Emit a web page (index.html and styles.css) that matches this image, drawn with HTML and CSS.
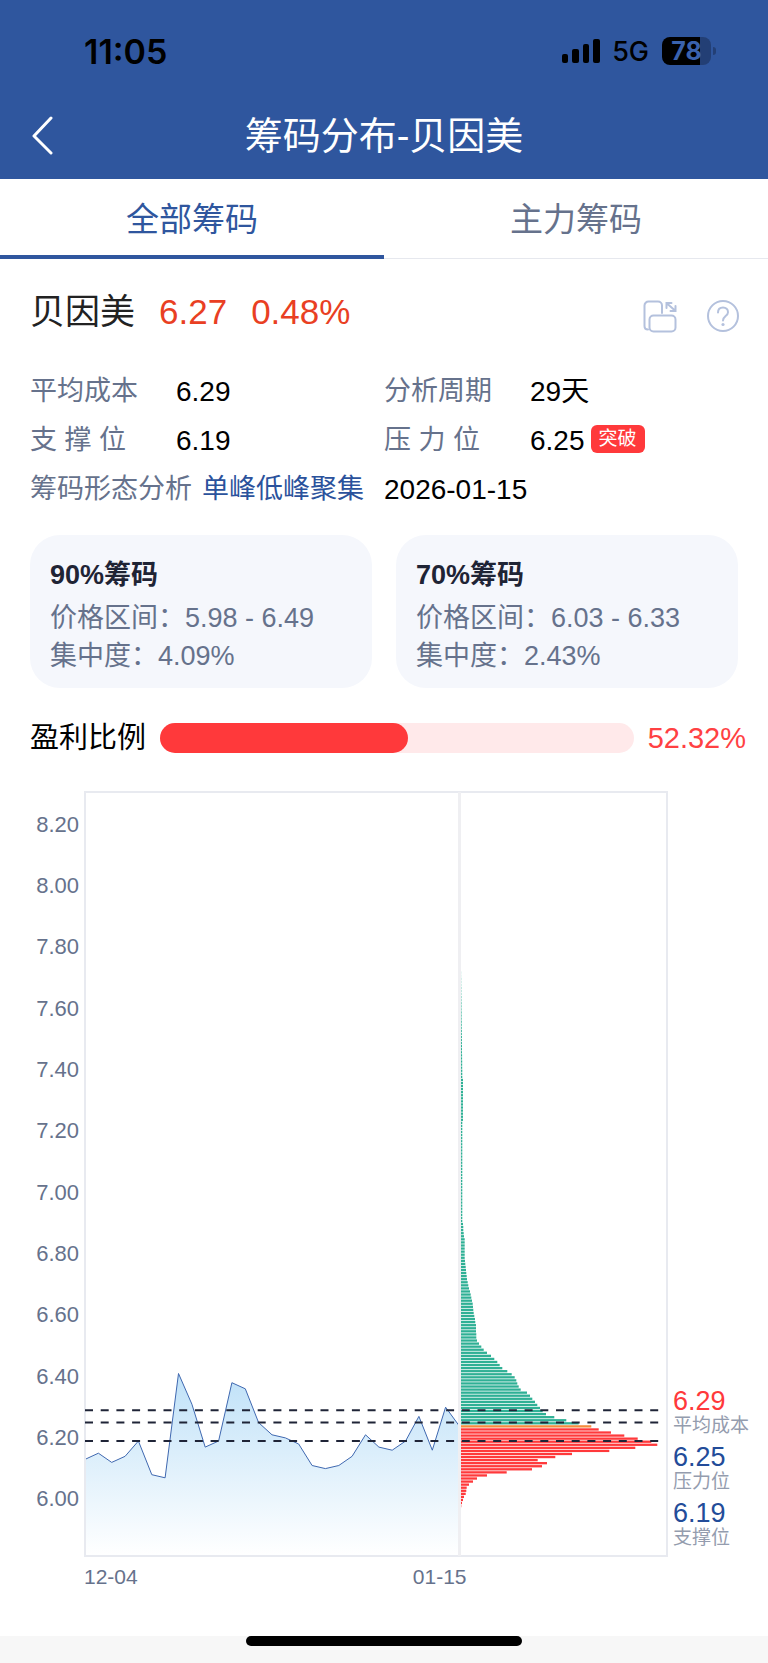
FILE: index.html
```html
<!DOCTYPE html>
<html lang="zh-CN">
<head>
<meta charset="utf-8">
<meta name="viewport" content="width=device-width, initial-scale=1">
<title>筹码分布-贝因美</title>
<link rel="stylesheet" href="styles.css">
</head>
<body>
<header class="header">
  <div class="status">
    <span class="clock">11:05</span>
    <div class="status-right">
      <svg class="signal" viewBox="0 0 38 24" aria-hidden="true">
        <rect x="0" y="15" width="6" height="9" rx="2"/>
        <rect x="10" y="10" width="7" height="14" rx="2"/>
        <rect x="21" y="5" width="6" height="19" rx="2"/>
        <rect x="31" y="0" width="7" height="24" rx="2"/>
      </svg>
      <span class="network">5G</span>
      <span class="battery"><span class="battery-body">78</span><span class="battery-tip"></span></span>
    </div>
  </div>
  <div class="nav">
    <button class="back" type="button" aria-label="返回">
      <svg viewBox="0 0 22 40" aria-hidden="true"><path d="M19 2 2 20l17 17"/></svg>
    </button>
    <h1 class="title">筹码分布-贝因美</h1>
  </div>
</header>

<nav class="tabs" role="tablist">
  <button class="tab tab-active" type="button" role="tab" aria-selected="true">全部筹码</button>
  <button class="tab" type="button" role="tab" aria-selected="false">主力筹码</button>
</nav>

<main class="main">
  <section class="quote">
    <h2 class="name">贝因美</h2>
    <span class="price">6.27</span>
    <span class="price">0.48%</span>
    <div class="tools">
      <button class="tool" type="button" aria-label="切换横屏">
        <svg viewBox="0 0 34 34" aria-hidden="true">
          <path d="M5 29.500C2.500 29.500 1.500 28 1.500 26V5.500a4 4 0 0 1 4-4H15a4 4 0 0 1 4 4V13"/>
          <rect x="6.500" y="15.500" width="26" height="16" rx="4"/>
          <path d="m24 3.500 8 7M23.500 8V3h5M32.500 6v5h-5"/>
        </svg>
      </button>
      <button class="tool" type="button" aria-label="帮助">
        <svg viewBox="0 0 34 34" aria-hidden="true">
          <circle cx="17" cy="16" r="15"/>
          <path d="M12 12.500c0-3 2-5 5-5s5 2 5 4.700c0 3.800-5 4-5 8.300"/>
          <circle class="dot" cx="17" cy="24.500" r="1.600"/>
        </svg>
      </button>
    </div>
  </section>

  <dl class="facts">
    <div class="fact"><dt class="fact-label">平均成本</dt><dd class="fact-value">6.29</dd></div>
    <div class="fact"><dt class="fact-label">分析周期</dt><dd class="fact-value">29天</dd></div>
    <div class="fact"><dt class="fact-label">支 撑 位</dt><dd class="fact-value">6.19</dd></div>
    <div class="fact"><dt class="fact-label">压 力 位</dt><dd class="fact-value">6.25<span class="badge">突破</span></dd></div>
    <div class="fact"><dt>筹码形态分析</dt><dd class="shape"><a class="shape-link" href="#">单峰低峰聚集</a></dd></div>
    <div class="fact"><dd class="fact-value">2026-01-15</dd></div>
  </dl>

  <section class="cards">
    <article class="card">
      <h3 class="card-title">90%筹码</h3>
      <p class="card-line">价格区间：5.98 - 6.49</p>
      <p class="card-line">集中度：4.09%</p>
    </article>
    <article class="card">
      <h3 class="card-title">70%筹码</h3>
      <p class="card-line">价格区间：6.03 - 6.33</p>
      <p class="card-line">集中度：2.43%</p>
    </article>
  </section>
</main>

<section class="profit">
  <span class="profit-label">盈利比例</span>
  <div class="bar"><div class="bar-fill" style="width:52.32%"></div></div>
  <span class="profit-value">52.32%</span>
</section>

<section class="chart">
  <div class="scale">
    <span>8.20</span><span>8.00</span><span>7.80</span><span>7.60</span><span>7.40</span><span>7.20</span>
    <span>7.00</span><span>6.80</span><span>6.60</span><span>6.40</span><span>6.20</span><span>6.00</span>
  </div>
  <svg class="plot" viewBox="0 0 584 766" role="img" aria-label="筹码分布图">
    <defs>
      <linearGradient id="area" gradientUnits="userSpaceOnUse" x1="0" y1="582" x2="0" y2="764">
        <stop offset="0" stop-color="#bfe1f8"/><stop offset="1" stop-color="#ffffff"/>
      </linearGradient>
    </defs>
    <path id="trend-area" class="trend-area"/>
    <path id="trend-line" class="trend-line"/>
    <rect class="frame" x="1" y="1" width="582" height="764"/>
    <path class="divider" d="M375.500 1V765"/>
    <g id="bars"></g>
    <g id="levels" class="levels"></g>
  </svg>
  <div class="legend">
    <div class="mark mark-cost"><b class="mark-price">6.29</b><span class="mark-name">平均成本</span></div>
    <div class="mark"><b class="mark-price">6.25</b><span class="mark-name">压力位</span></div>
    <div class="mark"><b class="mark-price">6.19</b><span class="mark-name">支撑位</span></div>
  </div>
  <div class="dates"><span>12-04</span><span>01-15</span></div>
</section>

<footer class="footer"><div class="home"></div></footer>
<script src="chart.js"></script>
</body>
</html>
```
FILE: styles.css
```css
* { box-sizing: border-box; }

body {
  margin: 0;
  min-height: 100vh;
  display: flex;
  flex-direction: column;
  background: #fff;
  color: #000;
  font-family: "Liberation Sans", "Noto Sans CJK SC", sans-serif;
  font-size: 27px;
  font-weight: 400;
}

h1, h2, h3, p, dl, dd { margin: 0; font-size: inherit; font-weight: inherit; }

button {
  padding: 0;
  border: 0;
  background: none;
  color: inherit;
  font: inherit;
  cursor: pointer;
}

/* Header */
.header { background: #2f569e; color: #fff; }

.status {
  display: flex;
  align-items: center;
  justify-content: space-between;
  height: 92px;
  padding: 10px 52px 0 84px;
  color: #000;
  font-family: Inter, sans-serif;
}
.clock { font-size: 34px; font-weight: 600; }
.status-right { display: flex; align-items: center; }
.signal { width: 38px; height: 24px; }
.network { margin: 0 13px 0 12px; font-size: 27px; font-weight: 500; }
.battery { display: flex; align-items: center; gap: 2px; }
.battery-body {
  width: 49px;
  height: 28px;
  border-radius: 8px;
  background: linear-gradient(to right, #000 78%, #233f75 78%);
  color: #3a62ad;
  font-size: 25px;
  font-weight: 700;
  line-height: 28px;
  text-align: center;
}
.battery-tip { width: 3px; height: 8px; border-radius: 0 4px 4px 0; background: #233f75; }

.nav {
  display: grid;
  grid-template-columns: 80px 1fr 80px;
  align-items: center;
  height: 87px;
}
.back { height: 40px; padding-left: 32px; text-align: left; }
.back svg { display: block; width: 22px; height: 40px; fill: none; stroke: #fff; stroke-width: 3; stroke-linecap: round; stroke-linejoin: round; }
.title { padding-top: 1px; font-size: 38px; line-height: 48px; text-align: center; }

/* Tabs */
.tabs { display: grid; grid-template-columns: 1fr 1fr; height: 80px; }
.tab { padding-bottom: 4px; box-shadow: inset 0 -1px #e6e8ee; color: #66728c; font-size: 33px; }
.tab-active { box-shadow: inset 0 -4px #2f569e; color: #2f569e; }

/* Quote */
.main { padding: 0 30px; }
.quote { display: flex; align-items: center; height: 106px; gap: 24px; font-size: 35px; line-height: 48px; }
.name { color: #222; }
.price { color: #e93f23; }
.tools { display: flex; gap: 29px; margin: 10px -2px 0 auto; }
.tool { width: 34px; height: 34px; }
.tool svg { display: block; width: 34px; height: 34px; fill: none; stroke: #b4c1dd; stroke-width: 2; stroke-linecap: round; }
.tool .dot { fill: #b4c1dd; stroke: none; }

/* Facts */
.facts { display: grid; grid-template-columns: 1fr 1fr; padding-top: 2px; color: #66728c; line-height: 49px; }
.fact { display: flex; height: 49px; white-space: nowrap; }
.fact-label { width: 146px; }
.fact-value { display: flex; align-items: center; color: #000; font-size: 28px; }
.shape { padding-left: 10px; }
.shape-link { color: #2b529c; text-decoration: none; }
.badge {
  margin: 0 0 4px 6px;
  padding: 0 8px;
  border-radius: 6px;
  background: #ff393b;
  color: #fff;
  font-size: 19px;
  line-height: 28px;
}

/* Cards */
.cards { display: grid; grid-template-columns: 1fr 1fr; gap: 24px; margin-top: 21px; }
.card { padding: 21px 20px 13px; border-radius: 30px; background: #f5f7fc; color: #66728c; }
.card-title { margin-bottom: 5px; color: #1f2435; font-weight: 700; line-height: 38px; }
.card-line { line-height: 38px; }

/* Profit ratio */
.profit { display: flex; align-items: center; height: 99px; margin-bottom: 4px; padding: 0 22px 0 30px; font-size: 29px; line-height: 40px; }
.bar { flex: 1; height: 30px; margin: 0 14px; border-radius: 15px; background: #ffe9ea; }
.bar-fill { height: 100%; border-radius: 15px; background: #ff393b; }
.profit-value { color: #ff4143; }

/* Chart */
.chart { display: grid; grid-template-columns: 84px 1fr 100px; }
.scale {
  display: flex;
  flex-direction: column;
  padding: 3px 5px 27px 0;
  color: #66728c;
  font-size: 22px;
  text-align: right;
}
.scale span { display: flex; flex: 1; align-items: center; justify-content: flex-end; }
.plot { display: block; width: 100%; height: auto; }
.frame { fill: none; stroke: #e8eaf0; stroke-width: 2; }
.divider { stroke: #efeff2; stroke-width: 3; }
.trend-area { fill: url(#area); }
.trend-line { fill: none; stroke: #3f68b0; stroke-width: 1; }
.levels { stroke: #1f2437; stroke-width: 2; stroke-dasharray: 8 7.700; }
.bar-above { fill: #2fb095; }
.bar-below { fill: #ff393b; }
.bar-now { fill: #f58b3c; }

.legend { display: flex; flex-direction: column; justify-content: flex-end; padding: 0 0 2px 5px; }
.mark { display: flex; flex-direction: column; height: 56px; color: #234c99; white-space: nowrap; }
.mark-cost { color: #ff393b; }
.mark-price { font-size: 27px; font-weight: 400; line-height: 28px; }
.mark-name { color: #949cae; font-size: 19px; line-height: 22px; }

.dates {
  display: flex;
  grid-column: 2;
  justify-content: space-between;
  width: 65.5%;
  padding-top: 8px;
  color: #66728c;
  font-size: 21px;
  line-height: 24px;
}

/* Home indicator */
.footer { margin-top: auto; padding-bottom: 17px; background: #f7f7f7; }
.home { width: 36%; height: 10px; margin: 0 auto; border-radius: 5px; background: #000; }
```
FILE: chart.js
```js
const SVG = "http://www.w3.org/2000/svg";
const yOf = price => 619.3 + (6.29 - price) * 306.6;

const closes = [6.13, 6.15, 6.12, 6.14, 6.19, 6.08, 6.07, 6.41, 6.31, 6.17, 6.19, 6.38, 6.36, 6.25, 6.21,
  6.20, 6.18, 6.11, 6.10, 6.11, 6.14, 6.21, 6.17, 6.16, 6.19, 6.27, 6.16, 6.30, 6.24];
const step = 374 / (closes.length - 1);
const line = "M" + closes.map((c, i) => (1 + i * step).toFixed(1) + " " + yOf(c).toFixed(1)).join("L");
document.getElementById("trend-line").setAttribute("d", line);
document.getElementById("trend-area").setAttribute("d", line + "V765H1Z");

// Chip volume per 0.01 of price, counted away from the current price of 6.24.
const above = [353, 316, 280, 255, 245, 237, 229, 222, 214, 207, 198, 179, 173, 169, 166, 161, 152, 139,
  124, 116, 109, 100, 90, 78, 68, 61, 54, 48, 46, 46, 45, 45, 45, 43, 42, 40, 38, 37, 36, 35, 33, 31, 29,
  27, 24, 22, 20, 18, 17, 16, 15, 14, 13, 12, 11, 11, 11, 11, 11, 11, 11, 9, 8, 7, 7, 6];
for (let i = 0; i < 33; i++) above.push(4);
for (let i = 0; i < 14; i++) above.push(6);
for (let i = 0; i < 36; i++) above.push(4 - i * 0.11);
const below = [413, 450, 490, 530, 571, 589, 523, 445, 333, 283, 230, 258, 243, 213, 137, 78, 48, 36, 24,
  17, 16, 14, 9, 6, 3, 1];

const bars = document.getElementById("bars");
function addBar(price, volume, kind) {
  const rect = document.createElementNS(SVG, "rect");
  rect.setAttribute("class", kind);
  rect.setAttribute("x", 377);
  rect.setAttribute("y", (yOf(price) - 0.4).toFixed(2));
  rect.setAttribute("width", (volume / 3).toFixed(1));
  rect.setAttribute("height", 2.3);
  bars.appendChild(rect);
}
above.forEach((v, i) => addBar(6.25 + i / 100, v, "bar-above"));
addBar(6.24, 391, "bar-now");
below.forEach((v, i) => addBar(6.23 - i / 100, v, "bar-below"));

const levels = document.getElementById("levels");
[6.29, 6.25, 6.19].forEach(price => {
  const path = document.createElementNS(SVG, "path");
  path.setAttribute("d", `M1 ${yOf(price).toFixed(1)}H576`);
  levels.appendChild(path);
});
```
